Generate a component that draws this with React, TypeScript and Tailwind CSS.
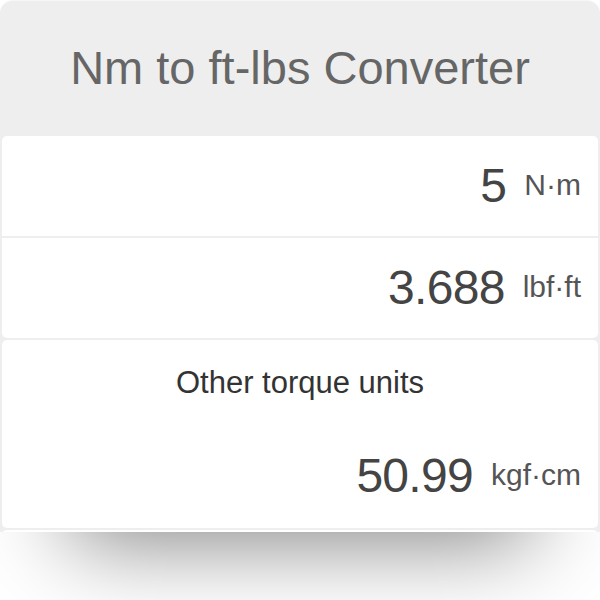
import React from "react";

const font = { fontFamily: '"Liberation Sans", Arial, Helvetica, sans-serif' };

function ValueRow({ value, unit, border }: { value: string; unit: string; border?: boolean }) {
  return (
    <div
      className={`flex items-center justify-end pr-[17px] ${border ? "h-[102px] border-b-2 border-[#eeeeee]" : "h-[100px]"}`}
    >
      <span className="text-[48px] leading-none tracking-[-0.7px] text-[#444444]">{value}</span>
      <span className="ml-[18px] mb-[3px] text-[30px] leading-none text-[#555555]">{unit}</span>
    </div>
  );
}

export default function App() {
  return (
    <div className="w-[600px] h-[600px] bg-white overflow-hidden" style={font}>
      <div className="flex h-[532px] flex-col overflow-hidden rounded-t-[13px] border-t border-[#f6f6f6] bg-[#eeeeee] px-[2px] shadow-[0_78px_85px_-70px_rgba(0,0,0,0.5)]">
        <div className="flex h-[135px] shrink-0 items-center justify-center text-[47px] text-[#666666]">
          Nm to ft-lbs Converter
        </div>
        <div className="shrink-0 rounded-[5px] bg-white">
          <ValueRow value="5" unit="N·m" border />
          <ValueRow value="3.688" unit="lbf·ft" />
        </div>
        <div className="mt-[2px] h-[188px] shrink-0 rounded-[5px] bg-white">
          <div className="flex h-[86px] items-center justify-center text-[31px] text-[#333333]">
            Other torque units
          </div>
          <ValueRow value="50.99" unit="kgf·cm" />
        </div>
        <div className="mt-[2px] h-[20px] shrink-0 rounded-t-[5px] bg-white" />
      </div>
    </div>
  );
}
